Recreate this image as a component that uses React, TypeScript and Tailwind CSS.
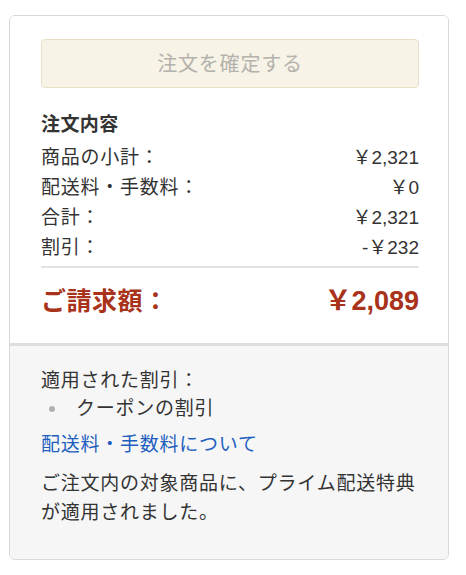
const rows = [
  { label: "商品の小計：", value: "￥2,321" },
  { label: "配送料・手数料：", value: "￥0" },
  { label: "合計：", value: "￥2,321" },
  { label: "割引：", value: "-￥232" },
];

export default function App() {
  return (
    <div
      className="min-h-[575px] bg-white pt-[15px] text-[#333]"
      style={{ fontFamily: '"Liberation Sans", "Noto Sans CJK JP", sans-serif' }}
    >
      <div className="ml-[9px] w-[440px] overflow-hidden rounded-[6px] border border-[#d9d9d9]">
        <div className="bg-white pb-[25px] pl-[31px] pr-[29px] pt-[23px]">
          <button
            type="button"
            disabled
            className="flex h-[49px] w-full items-center justify-center rounded-[4px] border border-[#e8dfc6] bg-[#f7f3e6] text-[20px] tracking-[0.04em] text-[#b4b2ad]"
          >
            注文を確定する
          </button>

          <h3 className="mt-[22px] text-[19px] font-bold leading-[30px] tracking-[0.02em] text-[#333]">
            注文内容
          </h3>
          <div className="mt-[3px]">
            {rows.map((r) => (
              <div
                key={r.label}
                className="flex items-center justify-between text-[19px] leading-[30px]"
              >
                <span className="tracking-[0.04em]">{r.label}</span>
                <span>{r.value}</span>
              </div>
            ))}
          </div>
          <div className="mt-[3px] h-[2px] bg-[#e3e3e3]" />
          <div className="mt-[16px] flex items-center justify-between font-bold leading-[34px] text-[#a8321a]">
            <span className="text-[25px] tracking-[0.02em]">ご請求額：</span>
            <span className="text-[27px]">￥2,089</span>
          </div>
        </div>

        <div className="border-t-[3px] border-[#dedede] bg-[#f6f6f6] pb-[32px] pl-[31px] pr-[29px] pt-[21px] text-[19px] leading-[28px] tracking-[0.04em]">
          <p>適用された割引：</p>
          <ul>
            <li className="flex items-center">
              <span className="ml-[8px] mr-[21px] h-[6px] w-[6px] rounded-full bg-[#b0b0b0]" />
              クーポンの割引
            </li>
          </ul>
          <a href="#" className="mt-[8px] block text-[#1f5fbf]">
            配送料・手数料について
          </a>
          <p className="mt-[10px] leading-[29px]">
            ご注文内の対象商品に、プライム配送特典が適用されました。
          </p>
        </div>
      </div>
    </div>
  );
}
